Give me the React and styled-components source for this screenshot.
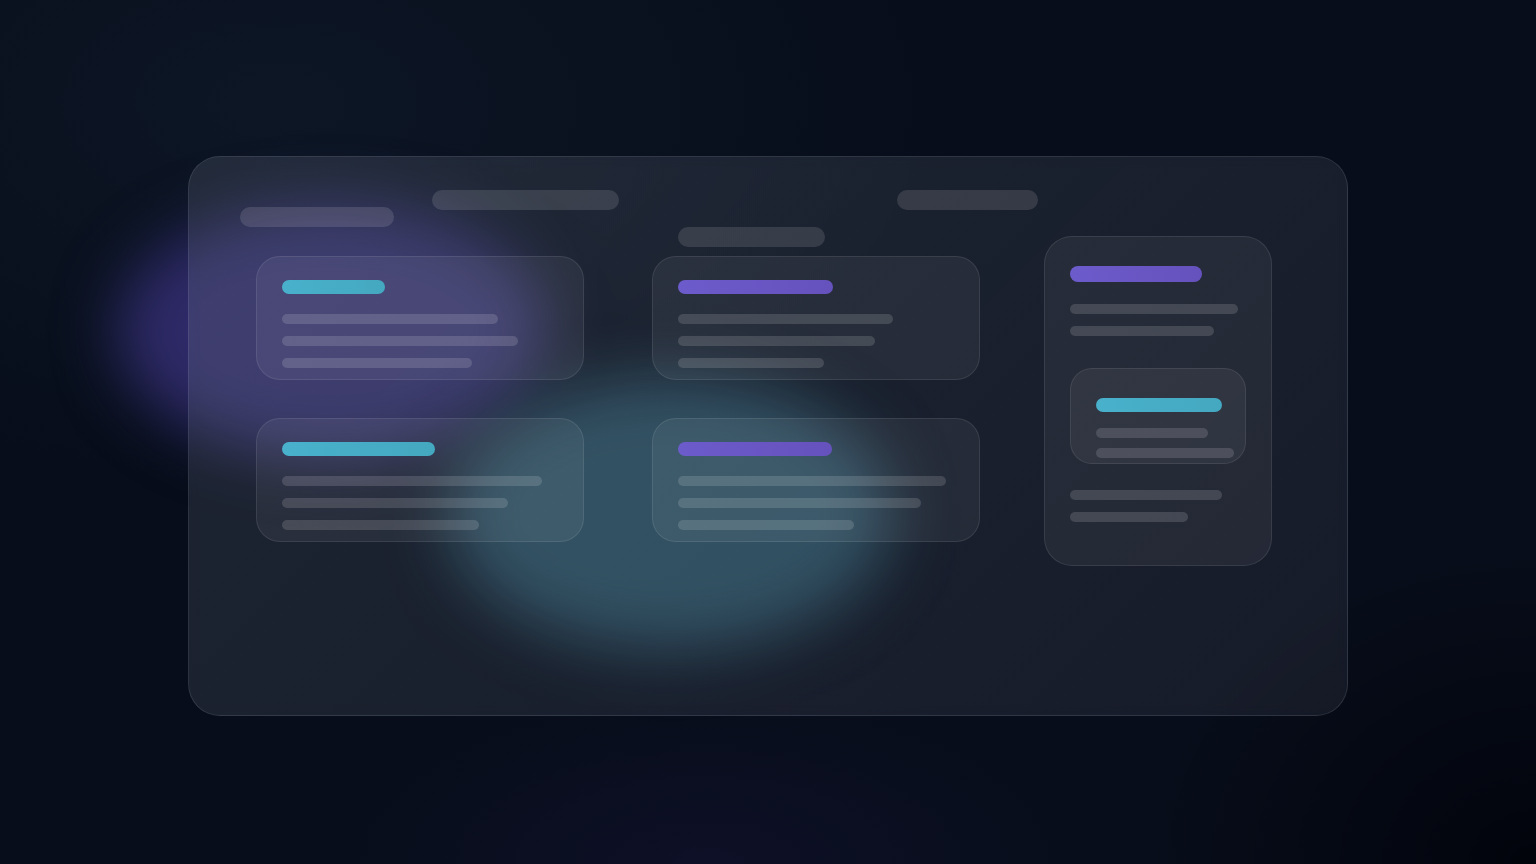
import React from "react";
import styled, { createGlobalStyle } from "styled-components";

const GlobalStyle = createGlobalStyle`
  html, body {
    margin: 0;
    padding: 0;
    background: #070d1a;
  }
  body {
    font-family: "Inter", "Liberation Sans", sans-serif;
  }
`;

const Stage = styled.div`
  position: relative;
  width: 100vw;
  height: 100vh;
  overflow: hidden;
  box-sizing: border-box;
  padding-top: 156px;
  background:
    radial-gradient(ellipse 520px 240px at 46% 100%, rgba(22, 20, 54, 0.45), transparent 75%),
    radial-gradient(ellipse 520px 420px at 100% 100%, rgba(0, 0, 6, 0.7), transparent 75%),
    radial-gradient(ellipse 900px 520px at 18% 12%, rgba(18, 30, 46, 0.55), transparent 75%),
    #070d1a;
`;

const Glow = styled.div`
  position: absolute;
  left: ${(p) => p.$x}px;
  top: ${(p) => p.$y}px;
  width: ${(p) => p.$w}px;
  height: ${(p) => p.$h}px;
  border-radius: 50%;
  background: ${(p) => p.$color};
  filter: blur(${(p) => p.$blur}px);
`;

const Panel = styled.div`
  position: relative;
  z-index: 1;
  width: 1160px;
  height: 560px;
  margin: 0 auto;
  box-sizing: border-box;
  border-radius: 32px;
  border: 1px solid rgba(255, 255, 255, 0.1);
  background: linear-gradient(
    135deg,
    rgba(160, 176, 204, 0.15),
    rgba(140, 150, 186, 0.11)
  );
  backdrop-filter: blur(6px) saturate(0.85);
`;

const Toolbar = styled.div`
  display: flex;
  align-items: flex-start;
  height: 37px;
  padding: 33px 0 0 51px;
`;

const Pill = styled.div`
  flex: none;
  width: ${(p) => p.$w}px;
  height: 20px;
  border-radius: 10px;
  margin-top: ${(p) => p.$top || 0}px;
  margin-left: ${(p) => p.$left || 0}px;
  background: rgba(255, 255, 255, 0.12);
`;

const Board = styled.div`
  display: flex;
  align-items: flex-start;
  padding-left: 67px;
`;

const Column = styled.div`
  display: flex;
  flex-direction: column;
  flex: none;
  width: ${(p) => p.$w}px;
  gap: ${(p) => p.$gap || 0}px;
  margin-left: ${(p) => p.$left || 0}px;
  margin-top: ${(p) => p.$top || 0}px;
`;

const Card = styled.div`
  flex: none;
  box-sizing: border-box;
  height: 124px;
  padding: 23px 25px;
  border-radius: 24px;
  border: 1px solid rgba(255, 255, 255, 0.09);
  background: rgba(255, 255, 255, 0.06);
  display: flex;
  flex-direction: column;
`;

const TallCard = styled(Card)`
  height: 330px;
  padding: 29px 25px;
  border-radius: 28px;
`;

const InnerCard = styled(Card)`
  width: 176px;
  height: 96px;
  margin-top: 32px;
  padding: 29px 25px 0;
  border-radius: 22px;
  background: rgba(255, 255, 255, 0.05);
`;

const Accent = styled.div`
  flex: none;
  width: ${(p) => p.$w}px;
  height: ${(p) => p.$h || 14}px;
  border-radius: 8px;
  background: ${(p) =>
    p.$tone === "violet"
      ? "linear-gradient(90deg, #6c5bcb, #6652bd)"
      : "linear-gradient(90deg, #49b1cc, #44a8c0)"};
  margin-bottom: ${(p) => p.$space || 20}px;
`;

const Lines = styled.div`
  flex: none;
  display: flex;
  flex-direction: column;
  gap: ${(p) => p.$gap || 12}px;
  margin-top: ${(p) => p.$top || 0}px;
`;

const Line = styled.div`
  flex: none;
  width: ${(p) => p.$w}px;
  height: 10px;
  border-radius: 5px;
  background: rgba(255, 255, 255, 0.14);
`;

const cards = {
  left: [
    { tone: "cyan", accent: 103, lines: [216, 236, 190] },
    { tone: "cyan", accent: 153, lines: [260, 226, 197] },
  ],
  middle: [
    { tone: "violet", accent: 155, lines: [215, 197, 146] },
    { tone: "violet", accent: 154, lines: [268, 243, 176] },
  ],
};

function TaskCard({ tone, accent, lines }) {
  return (
    <Card>
      <Accent $tone={tone} $w={accent} />
      <Lines>
        {lines.map((w, i) => (
          <Line key={i} $w={w} />
        ))}
      </Lines>
    </Card>
  );
}

export default function App() {
  return (
    <>
      <GlobalStyle />
      <Stage>
        <Glow $x={116} $y={204} $w={430} $h={254} $blur={30} $color="rgb(46, 42, 104)" />
        <Glow $x={448} $y={378} $w={444} $h={272} $blur={30} $color="rgb(30, 70, 88)" />
        <Panel>
          <Toolbar>
            <Pill $w={154} $top={17} />
            <Pill $w={187} $left={38} />
            <Pill $w={141} $left={278} />
          </Toolbar>
          <Board>
            <Column $w={328} $gap={38} $top={29}>
              {cards.left.map((c, i) => (
                <TaskCard key={i} {...c} />
              ))}
            </Column>
            <Column $w={328} $left={68}>
              <Pill $w={147} $left={26} />
              <Column $w={328} $gap={38} $top={9}>
                {cards.middle.map((c, i) => (
                  <TaskCard key={i} {...c} />
                ))}
              </Column>
            </Column>
            <Column $w={228} $left={64} $top={9}>
              <TallCard>
                <Accent $tone="violet" $w={132} $h={16} $space={22} />
                <Lines>
                  <Line $w={168} />
                  <Line $w={144} />
                </Lines>
                <InnerCard>
                  <Accent $tone="cyan" $w={126} $space={16} />
                  <Lines $gap={10}>
                    <Line $w={112} />
                    <Line $w={138} />
                  </Lines>
                </InnerCard>
                <Lines $top={26}>
                  <Line $w={152} />
                  <Line $w={118} />
                </Lines>
              </TallCard>
            </Column>
          </Board>
        </Panel>
      </Stage>
    </>
  );
}
